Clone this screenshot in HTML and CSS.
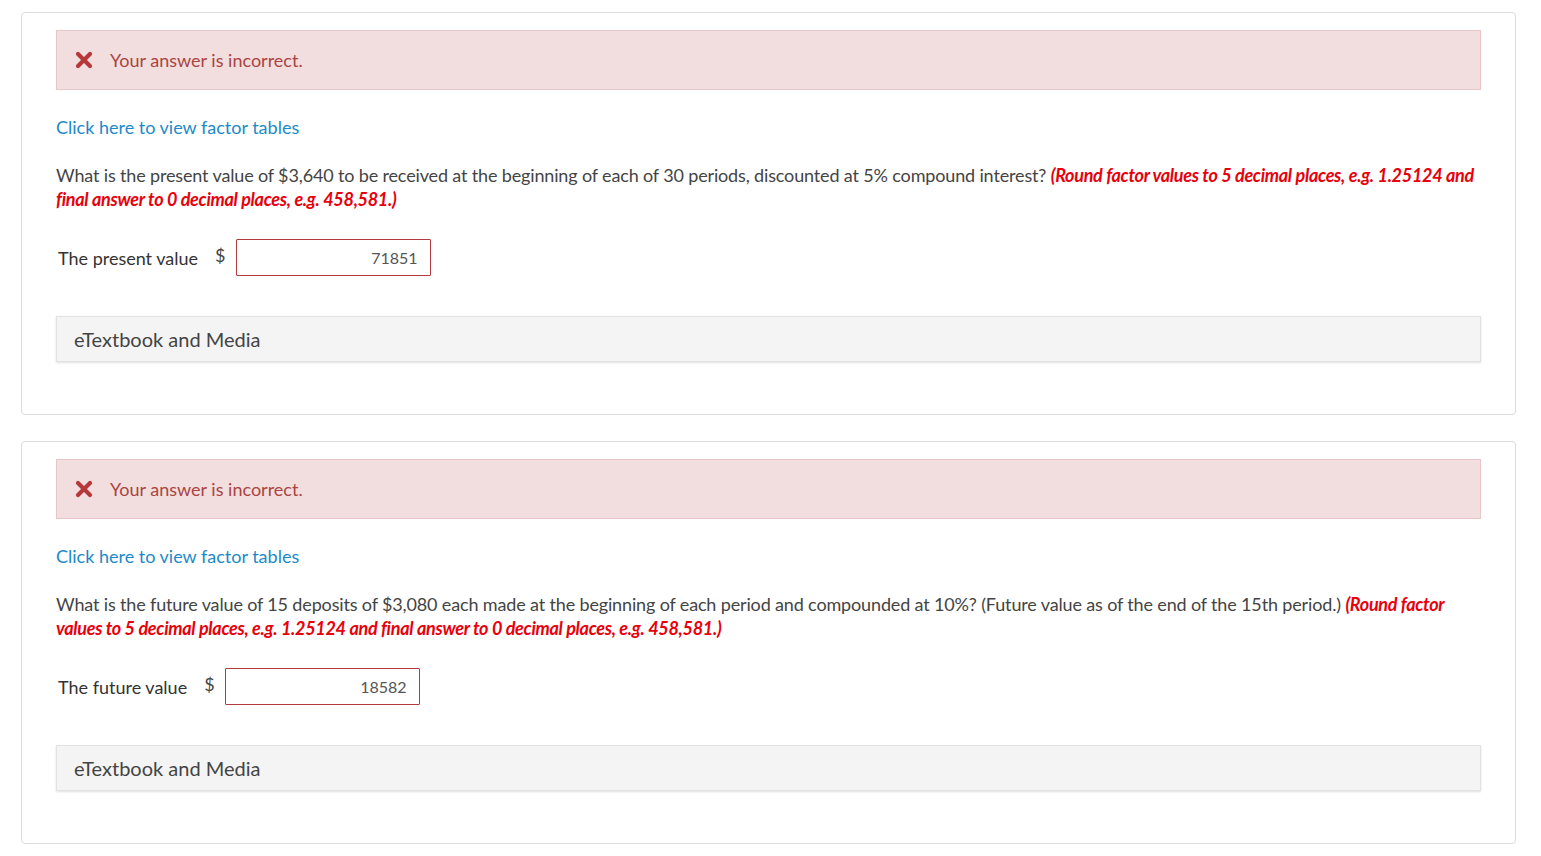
FILE: index.html
```html
<!DOCTYPE html>
<html lang="en">
<head>
  <meta charset="UTF-8" />
  <title>Questions</title>
  <link rel="stylesheet" href="styles.css">
</head>
<body>
  <div class="page">
    <!-- QUESTION 1 -->
    <div class="card">
      <div class="alert">
        <svg class="alert-icon" viewBox="0 0 18 18" width="18" height="18">
          <path d="M3 3 L15 15 M15 3 L3 15" stroke="#b5393a" stroke-width="4.2" stroke-linecap="round" />
        </svg>
        <span>Your answer is incorrect.</span>
      </div>

      <a class="factor-link" href="#">Click here to view factor tables</a>

      <p class="question">What is the present value of $3,640 to be received at the beginning of each of 30 periods, discounted at 5% compound interest? <em class="hint">(Round factor values to 5 decimal places, e.g. 1.25124 and final answer to 0 decimal places, e.g. 458,581.)</em></p>

      <div class="answer-row">
        <label class="answer-label">The present value</label>
        <span class="currency">$</span>
        <input class="answer-input" type="text" value="71851" />
      </div>

      <div class="media-box">eTextbook and Media</div>
    </div>

    <!-- QUESTION 2 -->
    <div class="card">
      <div class="alert">
        <svg class="alert-icon" viewBox="0 0 18 18" width="18" height="18">
          <path d="M3 3 L15 15 M15 3 L3 15" stroke="#b5393a" stroke-width="4.2" stroke-linecap="round" />
        </svg>
        <span>Your answer is incorrect.</span>
      </div>

      <a class="factor-link" href="#">Click here to view factor tables</a>

      <p class="question">What is the future value of 15 deposits of $3,080 each made at the beginning of each period and compounded at 10%? (Future value as of the end of the 15th period.) <em class="hint">(Round factor values to 5 decimal places, e.g. 1.25124 and final answer to 0 decimal places, e.g. 458,581.)</em></p>

      <div class="answer-row">
        <label class="answer-label">The future value</label>
        <span class="currency">$</span>
        <input class="answer-input" type="text" value="18582" />
      </div>

      <div class="media-box">eTextbook and Media</div>
    </div>
  </div>
</body>
</html>
```

FILE: styles.css
```css
body {
  margin: 0;
  background: #fff;
  font-family: Lato, 'Open Sans', sans-serif;
  color: #444;
}

.page {
  padding: 12px 25px 0 21px;
  display: flex;
  flex-direction: column;
  gap: 26px;
}

.card {
  border: 1px solid #dcdcdc;
  border-radius: 4px;
  padding: 17px 34px 52px 34px;
  display: flex;
  flex-direction: column;
  align-items: flex-start;
}

.alert {
  align-self: stretch;
  height: 58px;
  background-color: #f2dede;
  border: 1px solid #e6c6c9;
  display: flex;
  align-items: center;
  padding-left: 18px;
  color: #a94442;
  font-size: 18px;
}

.alert-icon {
  margin-right: 17px;
}

.factor-link {
  margin-top: 25px;
  color: #1c8ac9;
  text-decoration: none;
  font-size: 18px;
  line-height: 24px;
}

.question {
  margin: 24px 0 0 0;
  font-size: 18px;
  line-height: 24px;
  color: #444;
  letter-spacing: -0.15px;
}

.hint {
  color: #e8000b;
  font-weight: bold;
  letter-spacing: -0.3px;
}

.answer-row {
  margin-top: 28px;
  display: flex;
  align-items: center;
  padding-left: 2px;
}

.answer-label {
  font-size: 18px;
  color: #333;
}

.currency {
  font-size: 18px;
  color: #444;
  margin: -6px 10px 0 17px;
}

.answer-input {
  width: 195px;
  height: 37px;
  box-sizing: border-box;
  border: 1px solid #b23c3f;
  border-radius: 1px;
  outline: none;
  text-align: right;
  padding: 0 12px;
  font-family: Lato, sans-serif;
  font-size: 16px;
  color: #555;
  margin: 0;
}

.media-box {
  align-self: stretch;
  margin-top: 40px;
  height: 46px;
  box-sizing: border-box;
  background-color: #f4f4f4;
  border: 1px solid #e2e2e2;
  box-shadow: 0 1px 2px rgba(0,0,0,0.12);
  display: flex;
  align-items: center;
  padding-left: 17px;
  font-size: 20px;
  color: #444;
}
```
